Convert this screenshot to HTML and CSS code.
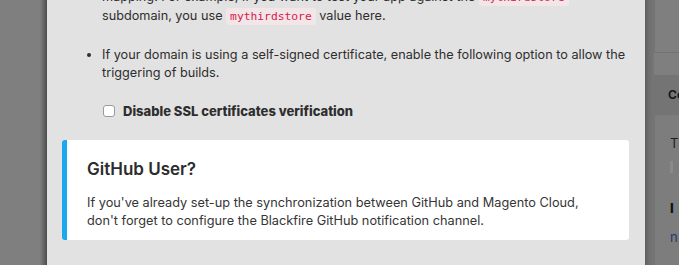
FILE: index.html
```html
<!DOCTYPE html>
<html>
<head>
<meta charset="utf-8">
<link rel="stylesheet" href="styles.css">
</head>
<body>
<div class="page">
  <div class="backdrop-left"></div>
  <div class="modal">
    <ul class="steps">
      <li class="cont">
        <p>mapping. For example, if you want to test your app against the <code>mythirdstore</code> subdomain, you use <code>mythirdstore</code> value here.</p>
      </li>
      <li>
        <p>If your domain is using a self-signed certificate, enable the following option to allow the triggering of builds.</p>
        <label class="check"><span class="box"></span><span>Disable SSL certificates verification</span></label>
      </li>
    </ul>
    <div class="callout">
      <h3>GitHub User?</h3>
      <p>If you've already set-up the synchronization between GitHub and Magento Cloud, don't forget to configure the Blackfire GitHub notification channel.</p>
    </div>
  </div>
  <div class="backdrop-right">
    <div class="shade"></div>
    <div class="under">
      <div class="under-top"><span class="mark">R</span></div>
      <div class="under-panel">
        <div class="under-head">Co</div>
        <div class="under-body">
          <span class="ub-t">T</span>
          <span class="ub-sq"></span>
          <span class="ub-i">I</span>
          <span class="ub-n">n</span>
        </div>
      </div>
    </div>
  </div>
</div>
</body>
</html>
```
FILE: styles.css
```css
* { box-sizing: border-box; }
html, body { margin: 0; padding: 0; }
body {
  width: 679px;
  height: 265px;
  overflow: hidden;
  background: #7f7f7f;
  font-family: Inter, "Noto Sans", sans-serif;
  color: #2e2e2e;
}
.page {
  display: flex;
  height: 265px;
}
.backdrop-left {
  width: 47px;
  flex: none;
  background: linear-gradient(to right, #7f7f7f 0, #7f7f7f 40px, #6a6a6a 43px, #545454 46px, #4e4e4e 47px);
}
.modal {
  width: 598px;
  flex: none;
  background: #e2e2e2;
  padding: 0 16px 0 15px;
  font-size: 12.7px;
  line-height: 18px;
}
.steps {
  margin: -12px 0 0 0;
  padding-left: 40px;
}
.steps li { margin: 0 0 20px 0; }
.steps li.cont { list-style: none; }
.steps p { margin: 0; }
code {
  font-family: "DejaVu Sans Mono", "Liberation Mono", monospace;
  font-size: 11.3px;
  color: #d3204a;
  background: #f3e6e9;
  border-radius: 3px;
  padding: 2px 4px;
}
.check {
  display: flex;
  align-items: center;
  gap: 8px;
  margin-top: 20px;
  font-weight: 800;
  font-size: 13px;
}
.box {
  width: 12px;
  height: 12px;
  border: 1px solid #9a9a9a;
  border-radius: 3px;
  background: #fff;
  margin-left: 1px;
}
.callout {
  margin-top: 19px;
  background: #fff;
  border-left: 5px solid #1aa9ee;
  border-radius: 3px;
  padding: 17px 30px 10px 20px;
}
.callout h3 {
  margin: 0 0 13px 0;
  font-size: 17px;
  line-height: 24px;
  font-weight: 600;
  color: #2c2c2c;
}
.callout p {
  margin: 0;
  font-size: 12.75px;
  line-height: 18px;
  color: #363636;
}
.backdrop-right {
  flex: 1;
  display: flex;
}
.shade {
  width: 9px;
  flex: none;
  background: linear-gradient(to right, #5f5f5f, #6e6e6e 40%, #767676);
}
.under {
  flex: 1;
  display: flex;
  flex-direction: column;
}
.under-top {
  height: 53px;
  border-left: 1px solid #737373;
  border-bottom: 1px solid #737373;
  background: #7f7f7f;
  display: flex;
  justify-content: flex-end;
  padding-top: 8px;
}
.mark {
  color: #8a3a1e;
  font-weight: 700;
  font-size: 13px;
  line-height: 16px;
  width: 2px;
  overflow: hidden;
}
.under-panel {
  margin-top: 22px;
  flex: 1;
  border-left: 1px solid #737373;
  display: flex;
  flex-direction: column;
}
.under-head {
  height: 40px;
  background: #747474;
  font-weight: 700;
  font-size: 12px;
  color: #161616;
  padding: 12px 0 0 13px;
}
.under-body {
  flex: 1;
  background: #7d7d7d;
  position: relative;
}
.under-body span { position: absolute; left: 15px; }
.ub-t { top: 20px; color: #1e1e1e; font-size: 13px; }
.ub-sq { top: 46px; width: 3px; height: 12px; background: #8a8a8a; }
.ub-i { top: 85px; font-weight: 800; color: #111; font-size: 13px; }
.ub-n { top: 114px; color: #243a6a; font-size: 13px; }
```
